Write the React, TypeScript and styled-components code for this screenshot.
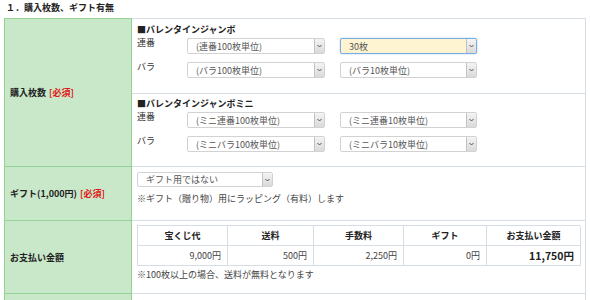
import React from "react";
import styled, { createGlobalStyle, css } from "styled-components";

const GlobalStyle = createGlobalStyle`
  html, body {
    margin: 0;
    padding: 0;
    background: #ffffff;
  }
  body {
    font-family: "Noto Sans CJK JP", "Noto Sans", sans-serif;
    color: #333333;
    font-size: 9px;
  }
`;

const Page = styled.div`
  width: 590px;
  height: 300px;
  overflow: hidden;
  padding: 0 4px;
  box-sizing: border-box;
`;

const Title = styled.h3`
  margin: 0;
  padding: 2px 2px 0;
  height: 18px;
  box-sizing: border-box;
  font-size: 9px;
  line-height: 11px;
  font-weight: 700;
  color: #222222;
`;

const FormGrid = styled.div`
  display: grid;
  grid-template-columns: 128px 1fr;
  grid-template-rows: 75px 73px 54px 73px 60px;
  border-top: 1px solid #d6dde4;
`;

const HeadCell = styled.div<{ $span?: number; $first?: boolean }>`
  grid-row: span ${(p) => p.$span ?? 1};
  display: flex;
  align-items: center;
  padding-left: 5px;
  background: #c9e8ca;
  border: 1px solid #96d196;
  border-top: ${(p) => (p.$first ? "1px solid #96d196" : "none")};
  margin-top: ${(p) => (p.$first ? "-1px" : "0")};
  font-weight: 700;
  font-size: 9px;
  color: #222222;
  box-sizing: border-box;
`;

const Required = styled.span`
  color: #e01818;
  margin-left: 3px;
`;

const BodyCell = styled.div<{ $pt?: number }>`
  border-right: 1px solid #d6dde4;
  border-bottom: 1px solid #d6dde4;
  padding: ${(p) => p.$pt ?? 5}px 5px 0 5px;
  box-sizing: border-box;
`;

const SectionTitle = styled.div`
  font-weight: 700;
  font-size: 9px;
  line-height: 12px;
  color: #222222;
  margin-bottom: 2px;
`;

const PickGrid = styled.div`
  display: grid;
  grid-template-columns: 35px 138px 137px;
  column-gap: 15px;
  row-gap: 8px;
`;

const PickLabel = styled.div`
  font-size: 9px;
  line-height: 12px;
  color: #333333;
  margin-top: -1px;
`;

const SelectBox = styled.div<{ $focus?: boolean; $w?: number; $h?: number }>`
  display: flex;
  align-items: center;
  width: ${(p) => (p.$w ? `${p.$w}px` : "100%")};
  height: ${(p) => p.$h ?? 16}px;
  box-sizing: border-box;
  border: 1px solid #d2d2d2;
  border-radius: 2px;
  background: #ffffff;
  padding-left: 8px;
  font-size: 9px;
  color: #555555;
  white-space: nowrap;
  ${(p) =>
    p.$focus &&
    css`
      background: #fff4d2;
      border-color: #78ade2;
      box-shadow: 0 0 2px #a9ccf0;
    `}
`;

const SelectText = styled.span`
  flex: 1;
`;

const SelectButton = styled.span`
  display: flex;
  align-items: center;
  justify-content: center;
  width: 9px;
  align-self: stretch;
  background: linear-gradient(#f4f4f4, #dadada);
  border-left: 1px solid #c2c2c2;
  border-radius: 0 1px 1px 0;
`;

const Note = styled.div`
  margin-top: 6px;
  font-size: 9px;
  line-height: 12px;
  color: #444444;
`;

const PriceTable = styled.div`
  display: grid;
  grid-template-columns: 90px 86px 90px 83px 94px;
  grid-template-rows: 20px 20px;
  border-top: 1px solid #d6dde4;
  border-left: 1px solid #d6dde4;
  width: 443px;
  box-sizing: border-box;
`;

const PriceCell = styled.div<{ $head?: boolean; $total?: boolean }>`
  display: flex;
  align-items: center;
  justify-content: ${(p) => (p.$head ? "center" : "flex-end")};
  padding: 0 6px;
  border-right: 1px solid #d6dde4;
  border-bottom: 1px solid #d6dde4;
  font-size: ${(p) => (p.$total ? "10.5px" : "9px")};
  font-weight: ${(p) => (p.$head || p.$total ? 700 : 400)};
  color: ${(p) => (p.$head || p.$total ? "#222222" : "#444444")};
`;

const PriceNote = styled(Note)`
  margin-top: 3px;
`;

function Chevron() {
  return (
    <svg width="5" height="4" viewBox="0 0 5 4">
      <path d="M0.5 1 L2.5 3 L4.5 1" fill="none" stroke="#555" strokeWidth="1" />
    </svg>
  );
}

function Select({
  text,
  focus,
  w,
  h,
}: {
  text: string;
  focus?: boolean;
  w?: number;
  h?: number;
}) {
  return (
    <SelectBox $focus={focus} $w={w} $h={h}>
      <SelectText>{text}</SelectText>
      <SelectButton>
        <Chevron />
      </SelectButton>
    </SelectBox>
  );
}

type Pick = { label: string; a: string; b: string; bFocus?: boolean };

function LotterySection({ title, picks }: { title: string; picks: Pick[] }) {
  return (
    <>
      <SectionTitle>{title}</SectionTitle>
      <PickGrid>
        {picks.map((p) => (
          <React.Fragment key={p.label}>
            <PickLabel>{p.label}</PickLabel>
            <Select text={p.a} />
            <Select text={p.b} focus={p.bFocus} />
          </React.Fragment>
        ))}
      </PickGrid>
    </>
  );
}

const prices = [
  { head: "宝くじ代", value: "9,000円" },
  { head: "送料", value: "500円" },
  { head: "手数料", value: "2,250円" },
  { head: "ギフト", value: "0円" },
  { head: "お支払い金額", value: "11,750円", total: true },
];

export default function App() {
  return (
    <Page>
      <GlobalStyle />
      <Title>１．購入枚数、ギフト有無</Title>
      <FormGrid>
        <HeadCell $span={2} $first>
          購入枚数<Required>[必須]</Required>
        </HeadCell>
        <BodyCell $pt={5}>
          <LotterySection
            title="■バレンタインジャンボ"
            picks={[
              { label: "連番", a: "(連番100枚単位)", b: "30枚", bFocus: true },
              { label: "バラ", a: "(バラ100枚単位)", b: "(バラ10枚単位)" },
            ]}
          />
        </BodyCell>
        <BodyCell $pt={4}>
          <LotterySection
            title="■バレンタインジャンボミニ"
            picks={[
              { label: "連番", a: "(ミニ連番100枚単位)", b: "(ミニ連番10枚単位)" },
              { label: "バラ", a: "(ミニバラ100枚単位)", b: "(ミニバラ10枚単位)" },
            ]}
          />
        </BodyCell>

        <HeadCell>
          ギフト(1,000円)<Required>[必須]</Required>
        </HeadCell>
        <BodyCell $pt={5}>
          <Select text="ギフト用ではない" w={136} h={15} />
          <Note>※ギフト（贈り物）用にラッピング（有料）します</Note>
        </BodyCell>

        <HeadCell>お支払い金額</HeadCell>
        <BodyCell $pt={4}>
          <PriceTable>
            {prices.map((p) => (
              <PriceCell key={p.head} $head>
                {p.head}
              </PriceCell>
            ))}
            {prices.map((p) => (
              <PriceCell key={p.head + "v"} $total={p.total}>
                {p.value}
              </PriceCell>
            ))}
          </PriceTable>
          <PriceNote>※100枚以上の場合、送料が無料となります</PriceNote>
        </BodyCell>

        <HeadCell />
        <BodyCell />
      </FormGrid>
    </Page>
  );
}
